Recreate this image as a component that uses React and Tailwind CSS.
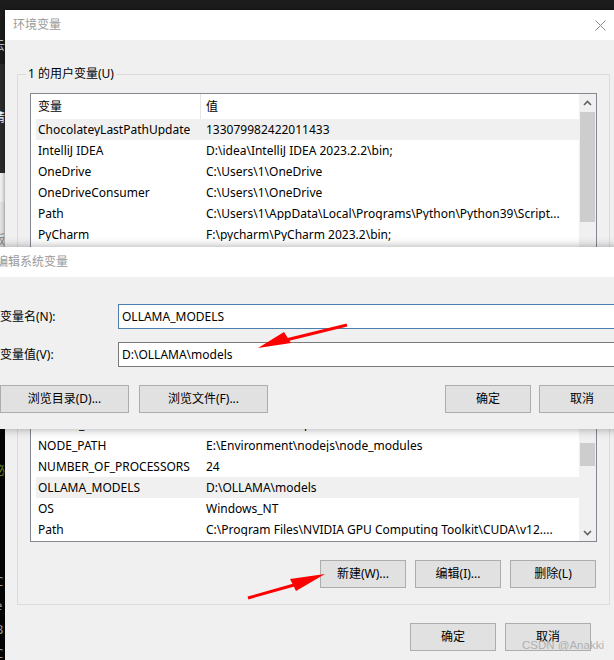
function Btn({ children, className = "" }) {
  return (
    <div
      className={
        "h-[28px] w-[86px] border border-[#adadad] bg-[#e1e1e1] flex items-center justify-center text-black shrink-0 " +
        className
      }
    >
      {children}
    </div>
  );
}

function Chevron({ up }) {
  return (
    <svg width="9" height="6" viewBox="0 0 9 6">
      <path
        d={up ? "M1 5 L4.5 1.5 L8 5" : "M1 1 L4.5 4.5 L8 1"}
        fill="none"
        stroke="#606060"
        strokeWidth="1.6"
      />
    </svg>
  );
}

function Row({ name, value, sel }) {
  return (
    <div
      className={
        "h-[21px] ml-[5px] pl-[2px] flex items-center shrink-0 whitespace-nowrap " +
        (sel ? "bg-[#f0f0f0]" : "")
      }
    >
      <div className="w-[168px] shrink-0 overflow-hidden">{name}</div>
      <div className="flex-1 overflow-hidden">{value}</div>
    </div>
  );
}

function Header() {
  return (
    <div className="h-[25px] ml-[5px] pl-[2px] flex items-center shrink-0 bg-white">
      <div className="w-[162px] shrink-0">变量</div>
      <div className="w-[1px] h-[25px] bg-[#e5e5e5] mr-[5px]" />
      <div>值</div>
    </div>
  );
}

export default function App() {
  return (
    <div className="relative w-[614px] h-[660px] overflow-hidden bg-[#1c1c1c] font-['Noto_Sans','Noto_Sans_CJK_SC',sans-serif] text-[12px] leading-none text-black">
      {/* desktop strip on the left */}
      <div className="absolute left-0 top-0 w-[5px] h-[660px] flex flex-col overflow-hidden">
        <div className="h-[65px] bg-[#1c1c1c] flex items-end pb-[12px]">
          <span className="ml-[-7px] text-[#bdbdbd]">云</span>
        </div>
        <div className="h-[110px] bg-[#2b2b2b] flex items-center">
          <span className="ml-[-7px] text-white">请</span>
        </div>
        <div className="h-[30px] bg-[#f0f0f0]" />
        <div className="h-[50px] bg-[#e3e3e3] flex items-end pb-[6px]">
          <span className="ml-[-7px] text-[#888]">版</span>
        </div>
        <div className="h-[180px] bg-[#f0f0f0]" />
        <div className="flex-1 bg-[#050505] flex flex-col text-[#9a9a9a]">
          <span className="ml-[-7px] mt-[36px] text-[#7a9a2a]">泌</span>
          <span className="ml-[-5px] mt-[98px] text-[13px]">C</span>
          <span className="ml-[-5px] mt-[11px] text-[13px]">e</span>
          <span className="ml-[-5px] mt-[11px] text-[13px]">B</span>
          <span className="ml-[-5px] mt-[11px] text-[13px]">C</span>
        </div>
      </div>

      {/* main window: 环境变量 */}
      <div className="absolute left-[5px] top-[10px] w-[616px] h-[660px] bg-[#f0f0f0] shadow-[0_0_4px_rgba(0,0,0,0.5)] flex flex-col">
        <div className="h-[30px] bg-white flex items-center justify-between pl-[8px] pr-[15px] shrink-0">
          <span className="text-[#9a9a9a]">环境变量</span>
          <svg width="11" height="11" viewBox="0 0 11 11">
            <path d="M0.5 0.5 L10.5 10.5 M10.5 0.5 L0.5 10.5" stroke="#8a8a8a" strokeWidth="1" />
          </svg>
        </div>

        {/* user variables group */}
        <div className="relative ml-[12px] mt-[34px] w-[593px] border border-[#dcdcdc] pt-[18px] px-[12px] pb-[17px] shrink-0">
          <div className="absolute -top-[7px] left-[8px] px-[2px] bg-[#f0f0f0] whitespace-nowrap">
            1 的用户变量(U)
          </div>
          <div className="h-[174px] border border-[#828790] bg-white flex">
            <div className="flex-1 flex flex-col overflow-hidden">
              <Header />
              <Row name="ChocolateyLastPathUpdate" value="133079982422011433" sel />
              <Row name="IntelliJ IDEA" value="D:\idea\IntelliJ IDEA 2023.2.2\bin;" />
              <Row name="OneDrive" value="C:\Users\1\OneDrive" />
              <Row name="OneDriveConsumer" value="C:\Users\1\OneDrive" />
              <Row name="Path" value="C:\Users\1\AppData\Local\Programs\Python\Python39\Script..." />
              <Row name="PyCharm" value="F:\pycharm\PyCharm 2023.2\bin;" />
              <Row name="TEMP" value="C:\Users\1\AppData\Local\Temp" />
            </div>
            <div className="w-[17px] bg-[#f0f0f0] flex flex-col shrink-0">
              <div className="h-[17px] flex items-center justify-center">
                <Chevron up />
              </div>
              <div className="mt-[1px] mx-[1px] h-[110px] bg-[#cdcdcd]" />
            </div>
          </div>
          <div className="mt-[19px] flex justify-end gap-[9px]">
            <Btn>新建(N)...</Btn>
            <Btn>编辑(E)...</Btn>
            <Btn>删除(D)</Btn>
          </div>
        </div>

        {/* system variables group */}
        <div className="relative ml-[12px] mt-[18px] w-[593px] border border-[#dcdcdc] pt-[18px] px-[12px] pb-[16px] shrink-0">
          <div className="absolute -top-[7px] left-[8px] px-[2px] bg-[#f0f0f0] whitespace-nowrap">
            系统变量(S)
          </div>
          <div className="h-[173px] border border-[#828790] bg-white flex">
            <div className="flex-1 flex flex-col overflow-hidden">
              <Header />
              <div className="flex-1 flex flex-col justify-end overflow-hidden pb-[1px]">
                <Row name="NODE_GLOBAL" value="E:\Environment\nodejs\node_global" />
                <Row name="MAVEN_HOME" value="E:\Environment\apache-maven-3.9.6" />
                <Row name="NODE_PATH" value="E:\Environment\nodejs\node_modules" />
                <Row name="NUMBER_OF_PROCESSORS" value="24" />
                <Row name="OLLAMA_MODELS" value="D:\OLLAMA\models" sel />
                <Row name="OS" value="Windows_NT" />
                <Row name="Path" value="C:\Program Files\NVIDIA GPU Computing Toolkit\CUDA\v12...." />
              </div>
            </div>
            <div className="w-[17px] bg-[#f0f0f0] flex flex-col shrink-0">
              <div className="h-[17px] flex items-center justify-center">
                <Chevron up />
              </div>
              <div className="flex-1">
                <div className="mt-[56px] mx-[1px] h-[23px] bg-[#cdcdcd]" />
              </div>
              <div className="h-[17px] flex items-center justify-center">
                <Chevron />
              </div>
            </div>
          </div>
          <div className="mt-[18px] flex justify-end gap-[9px]">
            <Btn>新建(W)...</Btn>
            <Btn>编辑(I)...</Btn>
            <Btn className="mr-[1px]">删除(L)</Btn>
          </div>
        </div>

        <div className="mt-[18px] flex justify-end gap-[9px] pr-[30px]">
          <Btn>确定</Btn>
          <Btn>取消</Btn>
        </div>
      </div>

      {/* edit dialog: 编辑系统变量 */}
      <div className="absolute left-[-12px] top-[247px] w-[660px] bg-[#f0f0f0] shadow-[0_0_9px_rgba(0,0,0,0.35)]">
        <div className="h-[30px] bg-white flex items-center pl-[8px] text-[#9a9a9a]">编辑系统变量</div>
        <div className="pt-[27px] pb-[16px] pl-[12px] pr-[23px]">
          <div className="flex items-center h-[25px]">
            <div className="w-[118px] shrink-0">变量名(N):</div>
            <div className="flex-1 h-[25px] border border-[#4d7fae] bg-white flex items-center pl-[3px]">
              OLLAMA_MODELS
            </div>
          </div>
          <div className="flex items-center h-[25px] mt-[13px]">
            <div className="w-[118px] shrink-0">变量值(V):</div>
            <div className="flex-1 h-[25px] border border-[#7a7a7a] bg-white flex items-center pl-[3px]">
              D:\OLLAMA\models
            </div>
          </div>
          <div className="flex items-center mt-[18px]">
            <Btn className="w-[129px] h-[27px]">浏览目录(D)...</Btn>
            <Btn className="w-[129px] h-[27px] ml-[10px]">浏览文件(F)...</Btn>
            <div className="flex-1" />
            <Btn className="h-[27px]">确定</Btn>
            <Btn className="h-[27px] ml-[8px]">取消</Btn>
          </div>
        </div>
      </div>

      {/* red annotation arrows */}
      <svg className="absolute left-0 top-0 pointer-events-none" width="614" height="660" viewBox="0 0 614 660">
        <line x1="347" y1="325" x2="286" y2="340" stroke="#ff0000" strokeWidth="3" />
        <polygon points="258,348 284,332 291,343" fill="#ff0000" />
        <line x1="248" y1="598" x2="294" y2="585" stroke="#ff0000" strokeWidth="3" />
        <polygon points="325,574 290,579 296,591" fill="#ff0000" />
      </svg>

      {/* watermark */}
      <div className="absolute left-[522px] top-[640px] font-['Liberation_Sans',sans-serif] text-[11.5px] text-[#b0b0b0] whitespace-nowrap">
        CSDN @Anakki
      </div>
    </div>
  );
}
